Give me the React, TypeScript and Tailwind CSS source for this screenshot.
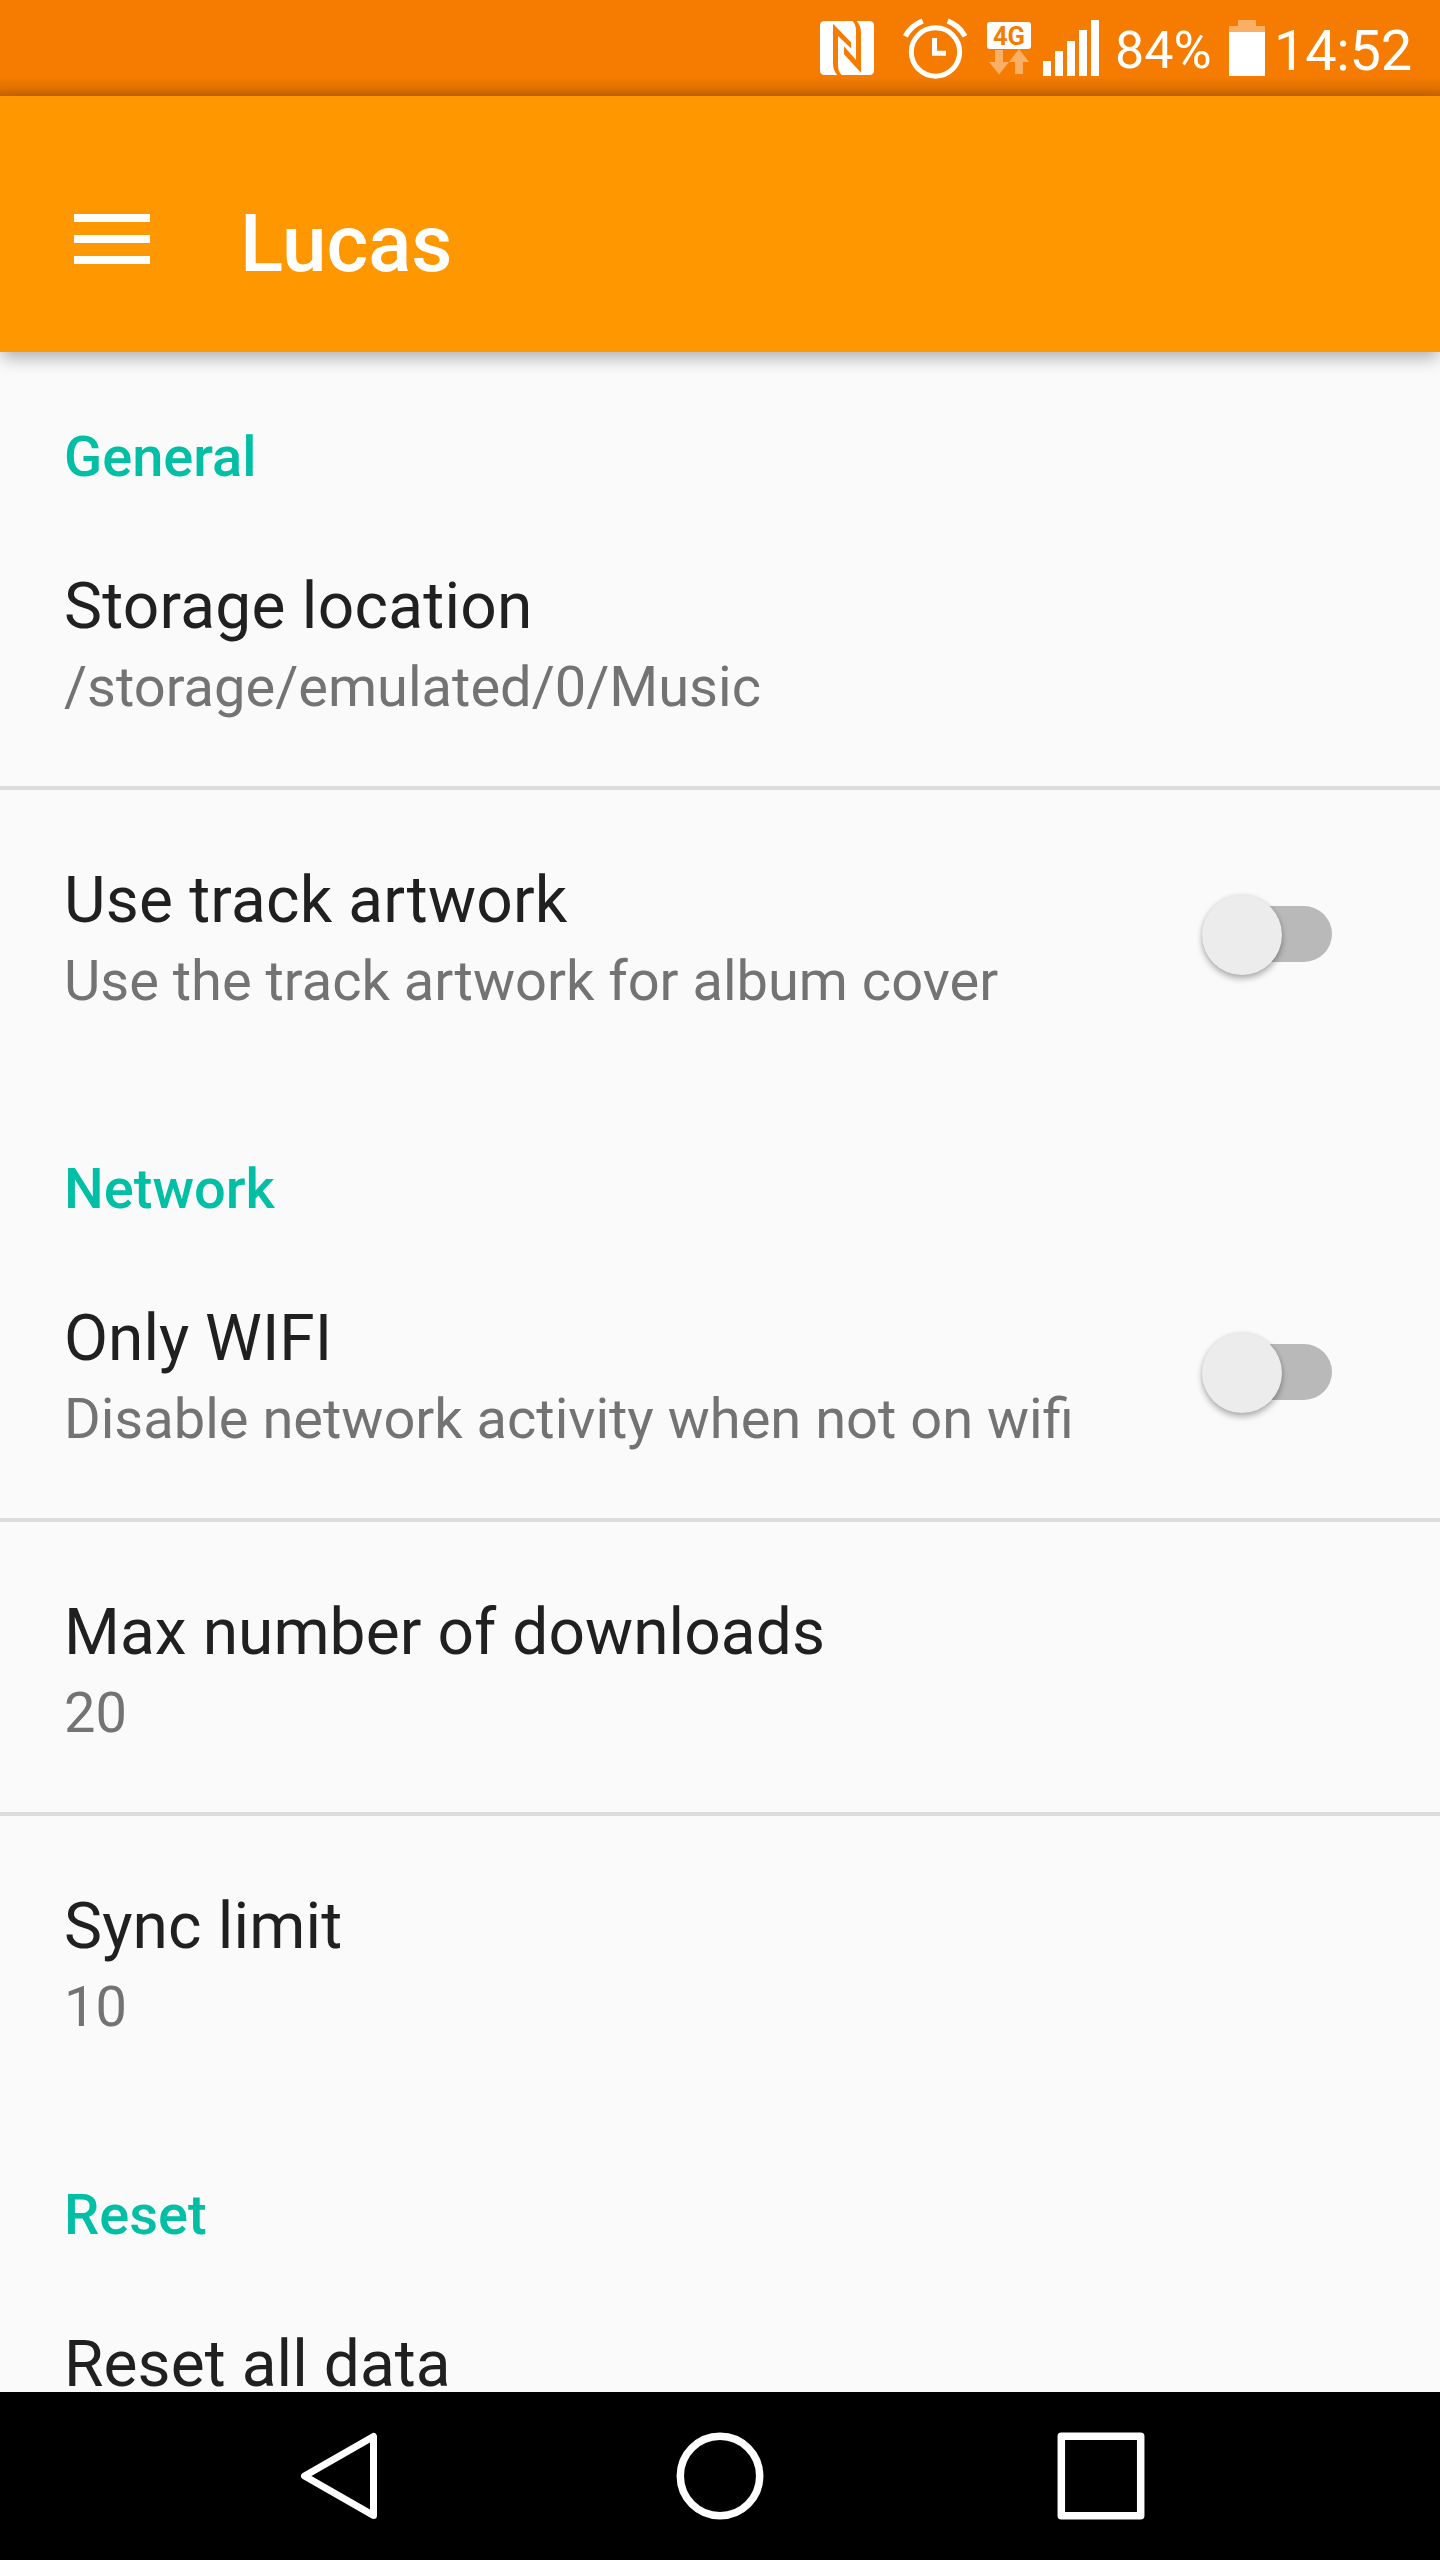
import React from "react";

function NfcIcon() {
  return (
    <svg className="block w-[54px] h-[54px]" viewBox="60 63 162 162">
      <rect x="60" y="63" width="162" height="162" rx="13" fill="#fff" />
      <path d="M99 71L153 127V145L114 108V195Q114 215 125 225H112Q99 212 99 190Z" fill="#f57c00" />
      <path d="M183 218L132 163V139L168 180V93Q168 73 157 63H170Q183 76 183 98Z" fill="#f57c00" />
    </svg>
  );
}

function AlarmIcon() {
  return (
    <svg className="block w-[64px] h-[62px]" viewBox="309 54 192 186" fill="none" stroke="#fff">
      <circle cx="406.500" cy="156" r="72.500" strokeWidth="15" />
      <path d="M403.500 114V160H438" strokeWidth="15" />
      <path d="M316 109A101 101 0 0 1 368 63" strokeWidth="16" />
      <path d="M495 109A101 101 0 0 0 443 63" strokeWidth="16" />
    </svg>
  );
}

function DataIcon() {
  return (
    <svg className="block w-[44px] h-[54px]" viewBox="0 0 44 54">
      <rect y="1" width="44" height="27" rx="3" fill="#fff" />
      <text x="22" y="23.700" textAnchor="middle" fontFamily="Roboto, sans-serif" fontWeight="700" fontSize="25.500" fill="#f57c00">4G</text>
      <path d="M8 29H16V41H22L12 53.500L2 41H8ZM32 28L42 41H36V53H28V41H22Z" fill="#fff" fillOpacity="0.4" />
    </svg>
  );
}

function SignalIcon() {
  return (
    <svg className="block w-[56px] h-[56px]" viewBox="0 0 56 56" fill="#fff">
      <path d="M0 41H8V56H0ZM12 31H20V56H12ZM24 21H32V56H24ZM36 10H44V56H36ZM48 0H56V56H48Z" />
    </svg>
  );
}

function BatteryIcon() {
  return (
    <svg className="block w-[36px] h-[56px]" viewBox="0 0 36 56" fill="#fff">
      <path d="M9 0H27V6H36V12H0V6H9Z" fillOpacity="0.4" />
      <path d="M0 12H36V56H0Z" />
    </svg>
  );
}

function StatusBar() {
  return (
    <header className="h-24 shrink-0 bg-[#f57c00] bg-linear-to-b from-[#f57c00] from-80% via-[#e07100] via-92% to-[#c46300] flex items-start pl-[820px] text-white whitespace-nowrap">
      <div className="pt-[21px]"><NfcIcon /></div>
      <div className="pt-[18px] ml-[29px]"><AlarmIcon /></div>
      <div className="pt-[21px] ml-[20px]"><DataIcon /></div>
      <div className="pt-[20px] ml-[12px]"><SignalIcon /></div>
      <div className="mt-[21px] ml-[16px] w-[97px] text-[52px] leading-[60px]">84%</div>
      <div className="pt-[20px] ml-[17px]"><BatteryIcon /></div>
      <div className="mt-[18px] ml-[9px] text-[56px] leading-[66px] tracking-[-0.3px]">14:52</div>
    </header>
  );
}

function Toolbar() {
  return (
    <div className="relative h-64 shrink-0 bg-[#ff9800] flex items-start pl-[74px] shadow-[0_8px_16px_-2px_rgba(0,0,0,0.3)]">
      <div className="mt-[118px] w-[76px] flex flex-col gap-[13px]">
        <div className="h-2 bg-white" />
        <div className="h-2 bg-white" />
        <div className="h-2 bg-white" />
      </div>
      <h1 className="mt-[100px] ml-[90px] text-[80px] leading-[96px] font-medium text-white">Lucas</h1>
    </div>
  );
}

function SectionHeader({ title }: { title: string }) {
  return (
    <h2 className="h-36 shrink-0 pl-16 pt-[71px] text-[56px] leading-[68px] font-medium text-[#00bfa5]">{title}</h2>
  );
}

function Switch() {
  return (
    <div className="relative mt-[105px] w-[130px] h-20">
      <div className="absolute left-[10px] right-0 top-[11px] h-14 rounded-full bg-[#b9b9b9]" />
      <div className="absolute left-0 top-0 size-20 rounded-full bg-[#ececec] shadow-[0_4px_6px_rgba(0,0,0,0.28),0_0_4px_rgba(0,0,0,0.1)]" />
    </div>
  );
}

type RowProps = { title: string; sub?: string; toggle?: boolean; divider?: boolean; tracking?: string };

function Row({ title, sub, toggle = false, divider = false, tracking = "tracking-[0.08px]" }: RowProps) {
  return (
    <div
      className={
        "h-[294px] shrink-0 flex items-start justify-between pl-16 pr-[108px] " +
        (divider ? "border-b-4 border-[#dcdcdc]" : "")
      }
    >
      <div className="pt-[73px]">
        <div className={"text-[64px] leading-[76px] text-[#202020] " + tracking}>{title}</div>
        {sub && <div className="mt-2 text-[56px] leading-[68px] text-[#737373]">{sub}</div>}
      </div>
      {toggle && <Switch />}
    </div>
  );
}

function NavBar() {
  return (
    <nav className="h-[168px] shrink-0 bg-black flex items-start pt-10 pl-[295px] gap-[293px]">
      <svg className="block size-22" viewBox="0 0 88 88" fill="none" stroke="#fff" strokeWidth="7" strokeLinejoin="round">
        <path d="M9.500 44L78.500 4.500V83.500Z" />
      </svg>
      <svg className="block size-22" viewBox="0 0 88 88" fill="none" stroke="#fff" strokeWidth="7.500">
        <circle cx="44" cy="44" r="39.700" />
      </svg>
      <svg className="block size-22" viewBox="0 0 88 88" fill="none" stroke="#fff" strokeWidth="7.500" strokeLinejoin="round">
        <rect x="4.300" y="4.300" width="79.400" height="79.400" />
      </svg>
    </nav>
  );
}

export default function App() {
  return (
    <div className="w-[1440px] h-[2560px] overflow-hidden bg-[#fafafa] flex flex-col font-[Roboto,sans-serif]">
      <StatusBar />
      <Toolbar />
      <main className="flex-1 min-h-0 overflow-hidden flex flex-col">
        <SectionHeader title="General" />
        <Row title="Storage location" sub="/storage/emulated/0/Music" tracking="tracking-[0.25px]" divider />
        <Row title="Use track artwork" sub="Use the track artwork for album cover" tracking="tracking-[0.2px]" toggle />
        <SectionHeader title="Network" />
        <Row title="Only WIFI" sub="Disable network activity when not on wifi" tracking="tracking-[0px]" toggle divider />
        <Row title="Max number of downloads" sub="20" divider />
        <Row title="Sync limit" sub="10" tracking="tracking-[0.15px]" />
        <SectionHeader title="Reset" />
        <Row title="Reset all data" />
      </main>
      <NavBar />
    </div>
  );
}
